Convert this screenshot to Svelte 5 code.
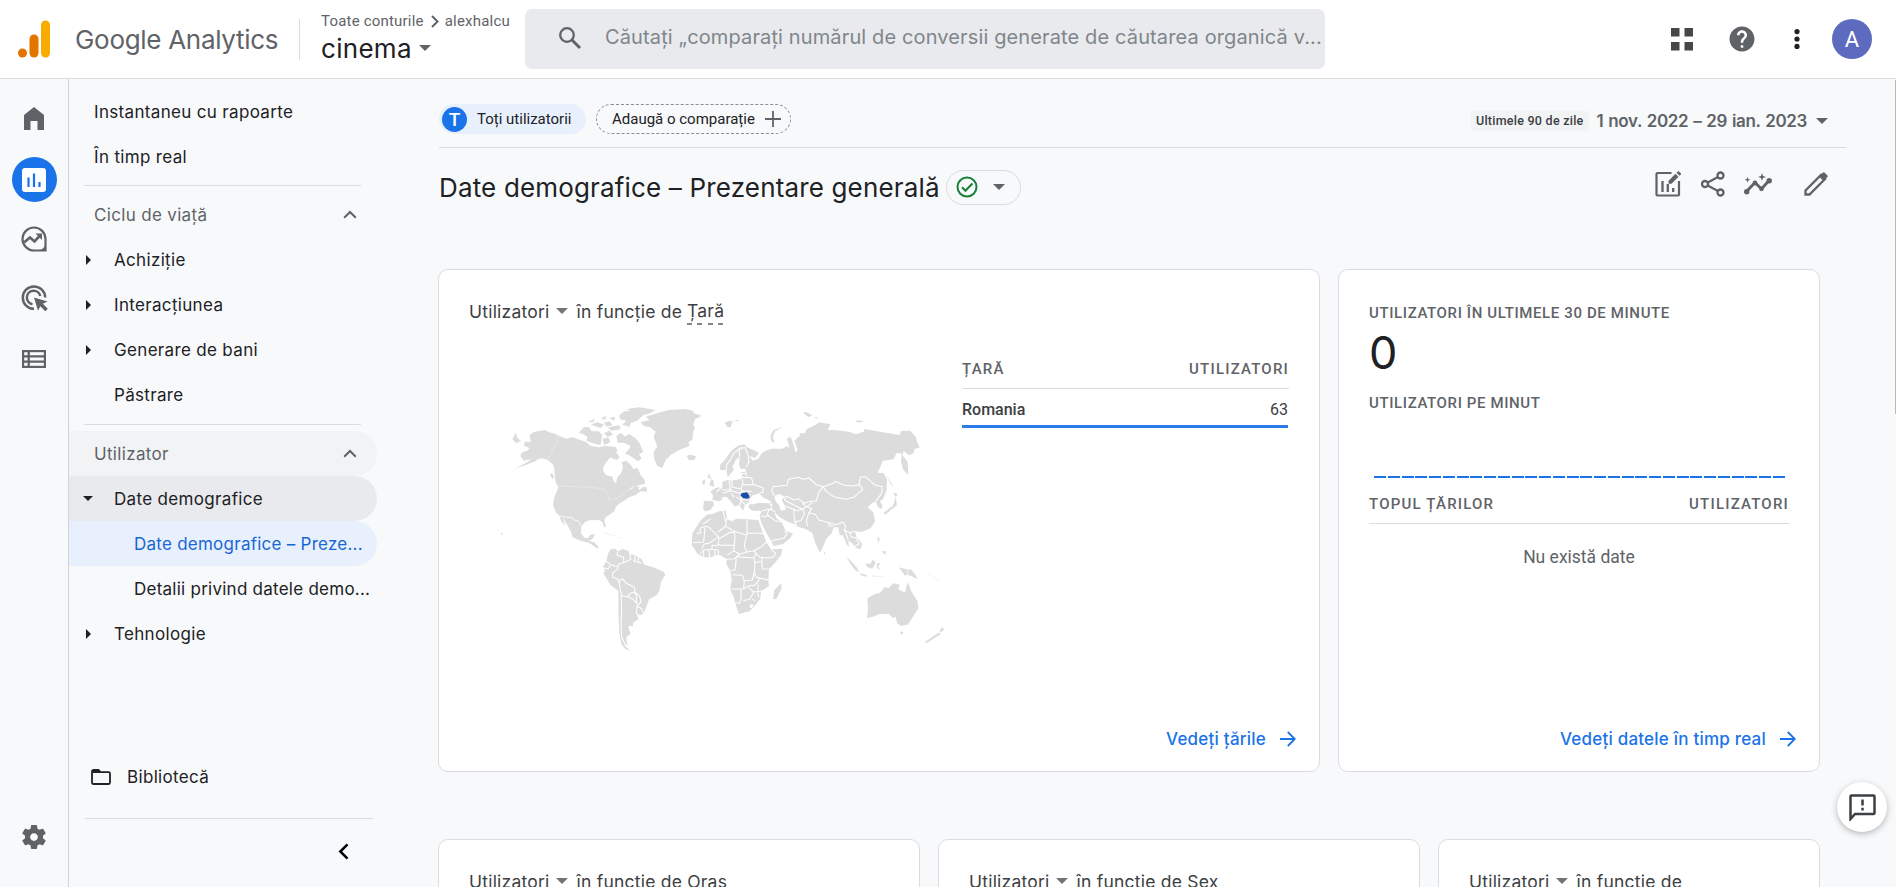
<script>
  const life = ['Achiziție', 'Interacțiunea', 'Generare de bani'];
  const bars = Array.from({ length: 30 });
  const more = [
    { dim: 'Oraș', wide: true },
    { dim: 'Sex', wide: true },
    { dim: '', wide: false }
  ];
</script>

{#snippet caret()}
  <svg class="caret" width="12" height="6" viewBox="0 0 12 6"><path d="M0 0h12L6 6z" fill="currentColor" /></svg>
{/snippet}

{#snippet chevronUp()}
  <svg class="chev" width="14" height="9" viewBox="0 0 14 9"><path d="M1.200 7.800 7 2l5.800 5.800" fill="none" stroke="currentColor" stroke-width="2" /></svg>
{/snippet}

{#snippet tri()}
  <svg class="tri" width="5" height="10" viewBox="0 0 5 10"><path d="M0 0l5 5-5 5z" fill="#202124" /></svg>
{/snippet}

{#snippet arrow()}
  <svg width="16" height="16" viewBox="0 0 16 16"><path d="M0 8h14.500M7.800 1l7 7-7 7" fill="none" stroke="currentColor" stroke-width="1.800" /></svg>
{/snippet}

<div class="page">
  <header>
    <svg class="logo" width="33" height="38" viewBox="0 0 33 38">
      <rect x="23" y="0.500" width="9" height="37" rx="4.500" fill="#f9ab00" />
      <rect x="11.500" y="14.500" width="9" height="23" rx="4.500" fill="#e37400" />
      <circle cx="4.500" cy="33" r="4.500" fill="#e37400" />
    </svg>
    <span class="brand t">Google Analytics</span>
    <div class="account">
      <div class="crumbs">
        <span class="t">Toate conturile</span>
        <svg width="8" height="13" viewBox="0 0 8 13"><path d="M1 1l5.500 5.500L1 12" fill="none" stroke="#5f6368" stroke-width="2" /></svg>
        <span class="t">alexhalcu</span>
      </div>
      <div class="property"><span class="t">cinema</span>{@render caret()}</div>
    </div>
    <div class="search">
      <svg width="24" height="24" viewBox="0 0 24 24"><circle cx="9" cy="9" r="6.800" fill="none" stroke="#5f6368" stroke-width="2.300" /><path d="M14 14l8 8" stroke="#5f6368" stroke-width="3" /></svg>
      <span class="t">Căutați „comparați numărul de conversii generate de căutarea organică v...</span>
    </div>
    <div class="tools">
      <svg width="22" height="23" viewBox="0 0 22 23" fill="#474747"><path d="M0 0h8.500v8.500H0zM13.500 0H22v8.500h-8.500zM0 14h8.500v8.500H0zM13.500 14H22v8.500h-8.500z" /></svg>
      <svg class="help" width="30" height="30" viewBox="0 0 24 24"><path fill="#5f6368" d="M12 2C6.480 2 2 6.480 2 12s4.480 10 10 10 10-4.480 10-10S17.520 2 12 2zm1 17h-2v-2h2v2zm2.070-7.750l-.9.920C13.450 12.900 13 13.500 13 15h-2v-.5c0-1.100.45-2.100 1.170-2.830l1.240-1.260c.37-.36.59-.86.59-1.410 0-1.100-.9-2-2-2s-2 .9-2 2H8c0-2.210 1.790-4 4-4s4 1.790 4 4c0 .88-.36 1.680-.93 2.250z" /></svg>
      <svg class="dots" width="6" height="20" viewBox="0 0 6 20" fill="#202124"><circle cx="3" cy="2.600" r="2.600" /><circle cx="3" cy="10" r="2.600" /><circle cx="3" cy="17.400" r="2.600" /></svg>
      <span class="avatar">A</span>
    </div>
  </header>

  <div class="body">
    <aside class="rail">
      <span class="slot"><svg width="20" height="23" viewBox="0 0 20 23"><path d="M0 8l10-8 10 8v15h-6.500v-9h-7v9H0z" fill="#5f6368" /></svg></span>
      <span class="slot active">
        <svg width="24" height="24" viewBox="0 0 24 24"><rect width="24" height="24" rx="3" fill="#fff" /><path d="M6.500 9.500V19M12 5.500V19M17.500 14v5" stroke="#1a73e8" stroke-width="2.200" /></svg>
      </span>
      <span class="slot">
        <svg width="26" height="26" viewBox="0 0 26 26" fill="none" stroke="#5f6368"><path d="M24.500 13v11.500H13A11.500 11.500 0 1 1 24.500 13z" stroke-width="2.200" /><path d="M3 16.500l6-5 4.500 4 6-6.500" stroke-width="2.600" /><path d="M14.500 7.500h6.500v6.500z" fill="#5f6368" stroke="none" /><path d="M25 17v8h-8c4-1 7-4 8-8z" fill="#5f6368" stroke="none" /></svg>
      </span>
      <span class="slot">
        <svg width="27" height="27" viewBox="0 0 27 27" fill="none" stroke="#5f6368" stroke-width="2.500"><path d="M13 23.800A11.200 11.200 0 1 1 24.200 12.500" /><path d="M11.500 19.200A6.800 6.800 0 1 1 19.300 11" /><path d="M13 12.500l13.500 4-4.600 2.300 4.900 5-2.500 2.400-5-5-2.300 4.600z" fill="#5f6368" stroke="none" /></svg>
      </span>
      <span class="slot">
        <svg width="24" height="18" viewBox="0 0 24 18" fill="none" stroke="#5f6368"><rect x="1" y="1" width="22" height="16" stroke-width="2.400" /><path d="M1 6.300h22M1 11.700h22M6.700 1v16" stroke-width="2.300" /></svg>
      </span>
      <span class="slot gear">
        <svg width="30" height="30" viewBox="0 0 24 24"><path fill="#5f6368" d="M19.140 12.940c.04-.3.060-.61.060-.94 0-.32-.020-.64-.070-.94l2.030-1.580c.18-.14.23-.41.120-.61l-1.920-3.320c-.12-.22-.37-.29-.59-.22l-2.390.96c-.5-.38-1.030-.7-1.620-.94l-.36-2.540c-.040-.24-.24-.41-.48-.41h-3.840c-.24 0-.43.17-.47.41l-.36 2.540c-.59.24-1.130.57-1.620.94l-2.390-.96c-.22-.080-.47 0-.59.22L2.740 8.870c-.12.21-.080.47.120.61l2.030 1.580c-.050.3-.090.63-.090.94s.020.64.070.94l-2.030 1.580c-.18.14-.23.41-.12.61l1.920 3.320c.12.22.37.29.59.22l2.390-.96c.5.38 1.030.7 1.620.94l.36 2.540c.050.24.24.41.48.41h3.840c.24 0 .44-.17.47-.41l.36-2.540c.59-.24 1.130-.56 1.620-.94l2.390.96c.22.080.47 0 .59-.22l1.920-3.320c.12-.22.070-.47-.12-.61l-2.010-1.580zM12 15.100c-1.700 0-3.100-1.400-3.100-3.100s1.400-3.100 3.100-3.100 3.100 1.400 3.100 3.100-1.400 3.100-3.100 3.100z" /></svg>
      </span>
    </aside>

    <nav>
      <div class="row"><span class="t">Instantaneu cu rapoarte</span></div>
      <div class="row"><span class="t">În timp real</span></div>
      <hr class="first" />
      <div class="row group"><span class="t">Ciclu de viață</span>{@render chevronUp()}</div>
      {#each life as item}
        <div class="row item">{@render tri()}<span class="t">{item}</span></div>
      {/each}
      <div class="row item"><span class="t">Păstrare</span></div>
      <hr class="second" />
      <div class="row group shade"><span class="t">Utilizator</span>{@render chevronUp()}</div>
      <div class="row item open">
        <svg class="tri down" width="10" height="5" viewBox="0 0 10 5"><path d="M0 0h10L5 5z" fill="#202124" /></svg>
        <span class="t">Date demografice</span>
      </div>
      <div class="row sub selected"><span class="t">Date demografice – Preze...</span></div>
      <div class="row sub"><span class="t">Detalii privind datele demo...</span></div>
      <div class="row item">{@render tri()}<span class="t">Tehnologie</span></div>
      <div class="library">
        <svg width="20" height="16" viewBox="0 0 20 16"><path d="M2.500 1h5l2 2.200h8c.8 0 1.500.6 1.500 1.400v9c0 .8-.6 1.400-1.400 1.400H2.400C1.600 15 1 14.400 1 13.600V2.400C1 1.600 1.700 1 2.500 1z" fill="none" stroke="#202124" stroke-width="1.800" /><path d="M1 1h6.800l2 3H1z" fill="#202124" /></svg>
        <span class="t">Bibliotecă</span>
      </div>
      <hr class="third" />
      <div class="collapse"><svg width="11" height="17" viewBox="0 0 11 17"><path d="M9.500 1.300 2.300 8.500l7.200 7.200" fill="none" stroke="#000" stroke-width="2.500" /></svg></div>
    </nav>

    <main>
      <div class="filters">
        <span class="chip"><b>T</b><span class="t">Toți utilizatorii</span></span>
        <span class="chip add"><span class="t">Adaugă o comparație</span><svg width="16" height="16" viewBox="0 0 16 16"><path d="M8 0v16M0 8h16" stroke="#5f6368" stroke-width="1.800" /></svg></span>
        <span class="range"><em class="t">Ultimele 90 de zile</em><strong class="t">1 nov. 2022 – 29 ian. 2023</strong>{@render caret()}</span>
      </div>

      <div class="titlebar">
        <h1 class="t">Date demografice – Prezentare generală</h1>
        <span class="status">
          <svg width="22" height="22" viewBox="0 0 22 22" fill="none" stroke="#188038"><circle cx="11" cy="11" r="9.500" stroke-width="2" /><path d="M6 11.300l3.400 3.400 7-7.200" stroke-width="2.100" /></svg>
          {@render caret()}
        </span>
        <div class="actions">
          <svg width="26" height="26" viewBox="0 0 26 26" fill="none" stroke="#5f6368"><path d="M16.500 2H2.500c-.8 0-1 .4-1 1v20.500c0 .6.4 1 1 1h20.500c.6 0 1-.4 1-1V10" stroke-width="2.200" /><path d="M7.500 10v11M12.800 13v8M18.200 17v4" stroke-width="2.300" /><path d="M13.500 9.800v3h3l7-7-3-3zM21.500 1.800l3 3 1.400-1.400c.3-.3.300-.8 0-1.100L24 .4c-.3-.3-.8-.3-1.100 0z" fill="#5f6368" stroke="none" /></svg>
          <svg width="24" height="26" viewBox="0 0 24 26" fill="none" stroke="#5f6368" stroke-width="2.300"><circle cx="19.500" cy="4.500" r="3" /><circle cx="4" cy="13" r="3" /><circle cx="19.500" cy="21.500" r="3" /><path d="M6.700 11.500 17 6M6.700 14.500 17 20" /></svg>
          <svg width="28" height="22" viewBox="0 0 28 22" fill="#5f6368"><path d="M2.500 18.500l8.500-9 6.500 6.500 7.500-8.500" fill="none" stroke="#5f6368" stroke-width="2.900" /><circle cx="2.700" cy="18.700" r="2.700" /><circle cx="11" cy="10" r="2.400" /><circle cx="17.500" cy="15.800" r="2.400" /><circle cx="25.200" cy="7.700" r="2.700" /><path d="M18 0l1 3 3 1-3 1-1 3-1-3-3-1 3-1zM3.500 4l.8 2 2 .8-2 .8-.8 2-.8-2-2-.8 2-.8z" /></svg>
          <svg width="24" height="24" viewBox="0 0 24 24"><path d="M1.500 22.500v-4L17 3l4 4L5.500 22.500z" fill="none" stroke="#5f6368" stroke-width="2.300" /><path d="M15 4.500 18.700.8c.7-.7 1.400-.7 2 0l2.500 2.500c.7.700.7 1.400 0 2L19.500 9z" fill="#5f6368" /></svg>
        </div>
      </div>

      <section class="cards">
        <article class="card big">
          <h2><span class="t">Utilizatori</span>{@render caret()}<span class="t">în funcție de</span><u class="t">Țară</u></h2>
          <div class="split">
            <svg class="map" width="470" height="270" viewBox="0 0 1410 810">
              <g fill="#dcdcdc">
                <path d="M122 135 135 126 150 123 168 120 180 127 194 130 212 138 232 146 250 142 266 147 290 155 305 168 330 172 345 168 378 170 386 180 380 190 368 202 360 206 348 222 341 238 350 255 370 260 375 276 382 279 384 263 396 250 402 232 398 216 412 212 426 225 434 238 445 233 455 255 467 270 468 281 450 286 430 290 415 302 440 291 452 300 460 292 472 291 475 305 455 304 440 315 420 322 405 332 393 340 380 350 377 362 365 372 350 382 346 390 351 408 346 413 340 396 330 390 300 391 285 398 277 412 276 430 286 443 298 444 304 434 318 432 311 446 300 452 318 458 328 470 326 476 300 458 280 454 262 447 250 440 246 425 233 403 222 383 228 408 216 392 212 378 200 366 192 345 195 325 205 300 208 290 200 278 197 255 195 230 190 221 176 210 160 205 148 207 140 213 110 225 76 238 110 219 128 208 104 212 94 198 98 188 115 182 122 174 105 167 108 155 125 156z" />
                <path d="M70 148 80 128 86 145 96 152 82 160z" />
                <path d="M455 96 482 90 470 80 508 68 540 60 590 57 612 62 615 70 638 77 618 88 612 104 618 112 612 128 610 150 598 156 602 168 570 180 545 195 530 210 520 234 505 228 495 205 494 185 505 170 494 140 500 125 484 112 465 108z" />
                <path d="M391 76 408 62 424 65 414 57 450 52 500 60 482 70 462 76 445 92 425 98 422 110 400 104 412 92 393 88z" />
                <path d="M270 128 285 111 300 112 308 124 328 124 340 134 337 150 335 166 312 160 292 152 296 140 282 132z" />
                <path d="M382 138 396 128 408 140 420 132 440 145 452 160 463 186 450 192 458 206 446 214 428 200 408 190 420 178 425 168 405 158 386 158z" />
                <path d="M305 104 325 96 345 104 335 114zM345 98 362 94 370 106 352 110zM358 112 392 106 394 118 366 122zM336 84 352 78 348 90zM360 84 378 80 376 92zM296 96 318 86 314 96zM344 130 362 122 372 134 356 140zM340 146 358 142 364 156 346 166zM364 200 378 184 392 200 384 210 372 206z" />
                <path d="M593 198 602 194 622 199 616 210 600 211z" />
                <path d="M430 290 445 288 452 294 436 300zM182 252 190 250 196 264 190 266zM36 428l7 3-5 4z" />
                <path d="M358 489 366 477 380 476 386 484 402 477 418 482 422 494 436 494 458 508 466 524 492 532 524 545 529 554 516 575 512 600 503 616 480 628 472 652 462 672 452 676 443 668 448 688 432 698 432 708 418 708 424 732 412 740 414 764 408 768 424 782 410 778 398 764 391 730 389 690 388 602 365 586 343 550 348 540 342 530 352 514z" />
                <path d="M340 424l20 7 18 4-2 3-22-5zM380 440l18 3-2 4zM22 418l8 3-4 3z" opacity=".4" />
                <path d="M660 250 655 262 668 268 660 285 675 290 674 272 664 262zM640 272 648 268 648 282 641 284z" />
                <path d="M645 332 672 334 675 345 664 360 648 364 642 355zM664 304 680 294 690 292 700 298 698 318 700 328 690 334 670 330 672 316z" />
              </g>
              <g transform="translate(690 0)" fill="#dcdcdc">
                <path d="M4 240 3 226 20 206 34 186 46 175 60 166 76 163 84 172 112 184 120 190 108 204 90 198 102 212 118 206 128 190 140 182 160 176 190 176 204 168 212 176 204 145 215 141 224 165 230 188 236 180 226 152 244 136 240 130 258 130 262 118 290 104 300 97 334 103 326 120 345 120 390 125 410 133 434 125 436 117 500 128 542 135 546 123 574 122 590 140 594 156 602 172 586 178 584 190 570 196 554 184 550 196 566 215 568 256 552 238 546 215 548 190 532 190 524 208 492 212 476 248 494 250 504 268 503 300 492 328 482 334 490 345 488 358 478 352 470 334 458 340 446 352 464 368 468 395 455 414 430 425 408 424 412 440 430 462 424 478 412 474 398 458 388 452 390 470 384 466 372 436 362 436 358 412 344 412 338 430 322 446 312 470 303 488 290 462 280 430 262 418 236 410 225 402 200 392 180 380 166 366 172 384 188 396 200 424 222 430 214 444 192 462 164 468 156 452 140 425 126 396 122 378 128 362 100 362 88 352 92 343 116 338 150 340 156 334 130 322 110 314 96 322 90 336 78 345 72 362 62 348 50 338 40 325 58 345 48 350 34 332 22 320 10 322 -6 318 -8 300 10 290 10 276 26 270 38 272 68 266 70 250 60 244 46 228 44 240 26 262 22 240z" />
                <path d="M-20 372 0 364 20 362 24 386 42 392 52 386 80 388 118 390 122 402 132 430 142 456 156 478 190 476 186 496 168 518 150 538 148 570 150 588 126 604 124 626 108 646 92 664 60 672 52 650 44 622 34 598 38 570 34 542 22 522 24 508 12 500 0 494 -16 498 -22 502 -46 502 -66 490 -74 476 -82 466 -80 430 -66 408 -54 390 -36 374z" />
                <path d="M186 580 188 594 172 628 162 626 166 600z" />
                <path d="M158 156 154 138 164 120 192 110 168 124 162 140 166 158zM16 98 30 92 42 94 34 112 26 112zM252 68 262 66 280 76 268 82zM410 91 430 92 432 97 414 97zM286 80l10 2-4 4zM46 90l14 0-6 4z" />
                <path d="M445 625 468 612 484 608 496 592 510 594 522 580 542 584 538 598 558 608 566 576 578 606 596 635 598 655 582 680 566 704 546 708 534 700 530 680 522 684 510 672 482 672 462 680 444 684 447 658z" />
                <path d="M544 724l10 2-8 10zM668 712l8 6-12 10-2-4zM658 728l8 4-44 28-4-4z" />
                <path d="M382 500 395 512 412 530 420 546 410 542 396 524zM424 550l20 6-2 4-18-5zM438 520 454 522 462 508 470 518 460 536 446 532zM474 520l10 0-6 8 4 12-8-6zM538 532 556 536 578 540 590 556 596 568 572 556 556 556 548 542zM314 484l5 6-3 5zM500 250l10 18 14 24-8-8zM522 308l14 4-6 10zM530 322l4 24-14 10-22 18-4-6 18-14 10-6zM476 440l6 4-2 14-5-8zM488 484l14 0-4 10zM474 320l12 20-4 14-8-10z" />
                <path d="M460 556l40 4 0 2-40-2zM600 530l60 40-2 2zM650 610l6 20z" opacity=".4" />
              </g>
              <g fill="#fff" transform="translate(690 0)">
                <path d="M92 330 100 316 122 312 132 322 158 338 118 338 98 344zM166 318 182 312 196 320 188 330 196 344 202 358 186 362 180 346 170 334zM40 232 50 210 62 200 60 222 64 236 80 236 80 246 62 246 56 250 48 244zM92 646l6-4 6 4-6 8-5-1z" />
              </g>
              <g fill="none" stroke="#fff" stroke-width="3.200" stroke-linejoin="round">
                <path d="M211 138 176 209M208 288 310 292 345 298 356 310 360 330 382 326 400 314 416 300" stroke-width="1.500" stroke="#efefef" />
                <path d="M212 377 230 382 250 382 258 392 266 391 278 410" stroke-width="2.500" />
                <path d="M386 484 384 496 404 502 404 518 388 522 386 538 372 548 370 560 386 568 390 574 400 566 412 580 436 592 438 608 426 608 416 620 400 618 394 600 390 574M352 514 370 526 386 530M345 534 358 536 364 526M404 518 414 514 426 508 422 494M432 512 458 520M438 496 438 514M448 502 448 516M416 620 430 626 444 640 440 608 452 620 456 636 444 648 458 656 462 668M444 648 442 672M396 616 398 660 396 700 398 740 410 768" />
              </g>
              <g transform="translate(690 0)" fill="none" stroke="#fff" stroke-width="3.200" stroke-linejoin="round">
                <path d="M22 240 22 226 32 212 44 190 62 176 80 172M62 200 60 182 66 172M78 172 86 192 90 214 82 232M80 246 84 262 98 264 102 282 132 294 132 306 110 316M68 250 82 252M68 260 84 264M70 266 72 280 66 296 40 292 38 272M72 284 102 284M66 296 70 304 62 310 70 330 90 330M62 310 36 302 10 310M38 298 20 300 8 300M52 322 66 328 62 346M36 310 46 322M66 332 78 344M10 290 -8 306M30 272 34 298M70 304 98 304" />
                <path d="M166 318 158 302 162 290 204 286 208 268 238 262 252 268 270 264 292 284 312 290 300 306 292 332 266 336 256 340 238 326 226 330 200 318 196 330M312 290 344 280 348 274 376 286 400 288 420 284 432 298 404 322 382 328 344 320 322 304 312 290M420 284 424 262 440 260 466 284 490 290 488 310 470 334M196 330 226 346 250 358 262 350 250 340M250 358 234 362 224 358 200 348M280 338 264 350 278 356 270 368 290 374 300 390 330 398 352 404 372 396 380 408 376 420 392 428 408 424M252 358 256 370 246 392 224 396M270 368 262 392 266 408M224 358 226 384 232 410M158 340 156 356 168 366M150 340 160 348M130 362 150 358 158 360M150 358 144 374 168 392 188 396M126 378 140 380 150 374M158 452 196 444 204 430 196 424M330 398 330 408 344 408M376 420 384 438 388 452M392 428 396 440 412 444 420 462 408 468" />
                <path d="M22 386 20 408 46 424 84 436M84 390 84 430 132 430M42 392 22 386M84 430 78 456 76 470 84 486 104 482 128 470 142 456M46 424 48 446 44 482 62 492 84 486M20 408-2 426M46 428 36 426 0 446-2 440M44 466 6 466-4 462M44 482 24 496M24 508 48 506 62 492M48 506 52 500 104 504 112 490M-46 408-30 412-2 440-30 460-44 462-52 476M-42 412-46 456-78 458M-68 430-56 430-56 414-46 412M-24 386-48 402M12 362 20 396M0 448-4 468-20 466-22 478-2 480-2 494M-22 478-46 480-56 492M-12 480-12 500M-30 478-28 502M-46 480-46 502M104 482 122 502 148 504 164 500 170 490 156 478M128 502 130 536 150 538M104 504 108 520 106 546 100 570 76 572 70 556 40 554M52 506 48 540 36 540M106 520 130 512M106 546 112 562 148 570M76 572 74 596 38 598M66 598 66 628 62 640 48 638M74 596 88 588 106 586 118 574 122 562M88 592 104 606 92 628 72 632M104 606 126 604M118 584 116 600 118 622M100 628 108 632" />
                <path d="M566 538V560" stroke-width="2" />
              </g>
              <path transform="translate(690 0)" fill="#174ea6" d="M64 316 68 310 84 307 90 316 92 323 84 326 72 324z" />
            </svg>
            <div class="table">
              <div class="thead"><span class="t">ȚARĂ</span><span class="t">UTILIZATORI</span></div>
              <div class="trow"><span class="t name">Romania</span><span class="t">63</span></div>
            </div>
          </div>
          <a class="link"><span class="t">Vedeți țările</span>{@render arrow()}</a>
        </article>

        <article class="card live">
          <h3 class="t">UTILIZATORI ÎN ULTIMELE 30 DE MINUTE</h3>
          <div class="count">0</div>
          <h3 class="t minute">UTILIZATORI PE MINUT</h3>
          <div class="bars">{#each bars as _}<i></i>{/each}</div>
          <div class="thead"><span class="t">TOPUL ȚĂRILOR</span><span class="t">UTILIZATORI</span></div>
          <p><span class="t">Nu există date</span></p>
          <a class="link"><span class="t">Vedeți datele în timp real</span>{@render arrow()}</a>
        </article>
      </section>

      <section class="cards next">
        {#each more as m}
          <article class="card" class:live={!m.wide}>
            <h2><span>Utilizatori</span>{@render caret()}<span>în funcție de {m.dim}</span></h2>
          </article>
        {/each}
      </section>
    </main>
  </div>
  <i class="scroll"></i>
  <span class="fab"><svg width="27" height="27" viewBox="0 0 27 27"><path d="M1.500 25V2.500c0-.6.4-1 1-1h22c.6 0 1 .4 1 1v16.500c0 .6-.4 1-1 1H6z" fill="none" stroke="#3c4043" stroke-width="2.500" /><path d="M13.500 5.500v6M13.500 13.800v2.800" stroke="#3c4043" stroke-width="2.500" /></svg></span>
</div>

<style>
  :global(body) { margin: 0; overflow: hidden; }
  .page { position: relative; width: 1896px; height: 887px; overflow: hidden; background: #f8f9fb; color: #202124; font-family: Inter, "Open Sans", sans-serif; font-size: 17px; box-sizing: border-box; }
  .page :global(*) { box-sizing: border-box; }
  svg { display: block; flex: none; }
  .t { white-space: pre; }
  header { display: flex; align-items: flex-start; height: 79px; background: #fff; border-bottom: 1px solid #dadce0; }
  .logo { margin: 20px 0 0 18px; }
  .brand { margin: 23px 0 0 24px; width: 224px; font-size: 26px; line-height: 34px; letter-spacing: -.3px; color: #5f6368; }
  .account { height: 41px; margin-top: 19px; border-left: 1px solid #dadce0; padding-left: 21px; width: 226px; }
  .crumbs { display: flex; align-items: center; height: 20px; margin-top: -8px; font: 15px/20px Roboto, sans-serif; letter-spacing: .2px; color: #5f6368; }
  .crumbs svg { margin: 0 6px 0 7px; }
  .property { display: flex; align-items: center; height: 34px; font-size: 26px; letter-spacing: .3px; color: #202124; }
  .property .caret { margin: 0 0 0 7px; color: #5f6368; }
  .search { display: flex; align-items: center; width: 800px; height: 60px; margin-top: 9px; padding: 0 0 3px 33px; border-radius: 7px; background: #e8eaed; color: #80868b; font-size: 20px; letter-spacing: .13px; }
  .search span { margin: 0 0 1px 23px; }
  .tools { display: flex; align-items: center; height: 78px; margin-left: 346px; }
  .help { margin-left: 34px; }
  .dots { margin-left: 37px; }
  .avatar { display: grid; place-items: center; width: 40px; height: 40px; margin-left: 32px; border-radius: 50%; background: #5c6bc0; color: #fff; font: 22px Roboto, sans-serif; }

  .body { display: flex; height: 808px; }
  .rail { display: flex; flex-direction: column; align-items: center; flex: none; width: 69px; padding: 18px 0 0; border-right: 1px solid #d0d2d5; }
  .slot { display: grid; place-items: center; width: 45px; height: 45px; margin-bottom: 15px; padding-bottom: 2px; }
  .active { padding-bottom: 0; border-radius: 50%; background: #1a73e8; }
  .gear { margin: auto 0 27px; }

  nav { flex: none; width: 327px; padding-top: 10px; letter-spacing: .33px; }
  .row { display: flex; align-items: center; width: 308px; height: 45px; padding-left: 25px; border-radius: 0 23px 23px 0; }
  hr { border: 0; height: 1px; background: #dadce0; margin: 0 0 0 15px; width: 277px; }
  .first { margin-top: 6px; margin-bottom: 6px; }
  .second { margin-top: 7px; margin-bottom: 6px; }
  .group { justify-content: space-between; padding-right: 20px; color: #5f6368; }
  .item { padding-left: 45px; }
  .tri { margin: 0 23px 0 -28px; }
  .down { margin: 0 21px 0 -31px; }
  .shade { background: #f1f3f4; }
  .open { background: #e8eaed; }
  .sub { padding-left: 65px; letter-spacing: .25px; }
  .selected { background: #e8f0fe; color: #1967d2; }
  .library { display: flex; align-items: center; height: 44px; margin: 99px 0 0 22px; gap: 16px; }
  .third { margin: 19px 0 0 16px; width: 288px; }
  .collapse { margin: 24px 0 0 269px; }

  main { flex: none; padding-left: 42px; width: 1500px; }
  .filters { display: flex; align-items: center; width: 1407px; height: 69px; padding: 12px 0 0; border-bottom: 1px solid #dadce0; font: 15px Roboto, sans-serif; margin-left: 1px; }
  .chip { display: flex; align-items: center; height: 30px; width: 147px; border-radius: 15px; background: #e8f0fe; }
  .chip b { display: grid; place-items: center; width: 25px; height: 25px; margin: 0 10px 0 3px; border-radius: 50%; background: #1a73e8; color: #fff; font: 500 19px Roboto, sans-serif; }
  .add { width: 195px; margin-left: 10px; padding-left: 15px; gap: 10px; border: 1px dashed #8a8d91; background: none; }
  .range { display: flex; align-items: center; margin: 4px 18px 0 auto; color: #5f6368; }
  .range em { font: 500 12.500px/20px Roboto, sans-serif; letter-spacing: .25px; color: #3c4043; background: #f1f3f4; padding: 0 5px; }
  .range strong { font: 600 17px Inter, sans-serif; letter-spacing: -.35px; word-spacing: 1px; margin: 0 9px 0 8px; }
  .titlebar { display: flex; align-items: center; height: 78px; margin-left: 1px; }
  h1 { margin: 0 6px 0 0; font-size: 26px; font-weight: 400; letter-spacing: .16px; }
  .status { display: flex; align-items: center; width: 75px; height: 35px; padding-left: 9px; gap: 15px; border: 1px solid #dadce0; border-radius: 18px; color: #5f6368; }
  .actions { display: flex; align-items: center; width: 173px; margin: 0 68px 7px auto; }
  .actions svg:nth-child(2) { margin-left: 20px; }
  .actions svg:nth-child(3) { margin-left: 19px; }
  .actions svg:nth-child(4) { margin-left: 32px; }

  .cards { display: flex; gap: 18px; margin-top: 43px; }
  .card { display: flex; flex: none; flex-direction: column; width: 482px; height: 503px; padding: 29px 30px 0; background: #fff; border: 1px solid #dadce0; border-radius: 10px; }
  .big { width: 882px; }
  .next { margin-top: 67px; }
  .next .live { width: 382px; }
  h2 { display: flex; align-items: center; height: 24px; margin: 0; font-size: 17.500px; font-weight: 400; letter-spacing: .22px; color: #3c4043; white-space: nowrap; }
  h2 .caret { margin: 0 9px 0 6px; color: #757575; }
  h2 u { text-decoration: none; margin-left: 5px; height: 27px; line-height: 24px; padding-top: 1px; background: repeating-linear-gradient(90deg, #80868b 0 5px, transparent 5px 10.500px) bottom / 100% 2px no-repeat; }
  .split { display: flex; margin-top: 32px; height: 366px; }
  .map { margin: 35px 0 0 20px; width: 470px; height: 270px; }
  .table { margin-left: 3px; width: 327px; }
  .thead { display: flex; justify-content: space-between; align-items: center; height: 34px; padding-bottom: 5px; border-bottom: 1px solid #dadce0; font: 500 15px Roboto, sans-serif; letter-spacing: 1.200px; color: #5f6368; }
  .trow { display: flex; justify-content: space-between; align-items: center; width: 326px; height: 39px; border-bottom: 3px solid #2a7ae9; font: 16px Roboto, sans-serif; color: #3c4043; padding-top: 4px; }
  .name { font-weight: 500; }
  .link { display: flex; align-items: center; gap: 14px; margin: auto -7px 21px auto; height: 22px; font-weight: 500; letter-spacing: .22px; color: #1a73e8; }
  h3 { margin: 4px 0 0; font: 500 15px/20px Roboto, sans-serif; letter-spacing: .62px; color: #5f6368; align-self: flex-start; }
  .count { font-size: 45px; line-height: 50px; margin-top: 5px; height: 50px; }
  .minute { margin-top: 15px; }
  .bars { display: flex; gap: 1.700px; margin: 63px 4px 0 5px; }
  .bars i { flex: 1; height: 2px; background: #1a73e8; }
  .live .thead { height: 46px; padding-bottom: 0; padding-top: 6px; }
  p { margin: 22px 0 0; text-align: center; font: 17.500px/22px Roboto, sans-serif; color: #5f6368; }
  .scroll { position: absolute; right: 0; top: 80px; width: 1px; height: 334px; background: #b8babd; }
  .fab { position: absolute; left: 1837px; top: 782px; display: grid; place-items: center; width: 50px; height: 50px; border-radius: 50%; background: #fff; box-shadow: 0 2px 6px rgba(60, 64, 67, .35); }
</style>
